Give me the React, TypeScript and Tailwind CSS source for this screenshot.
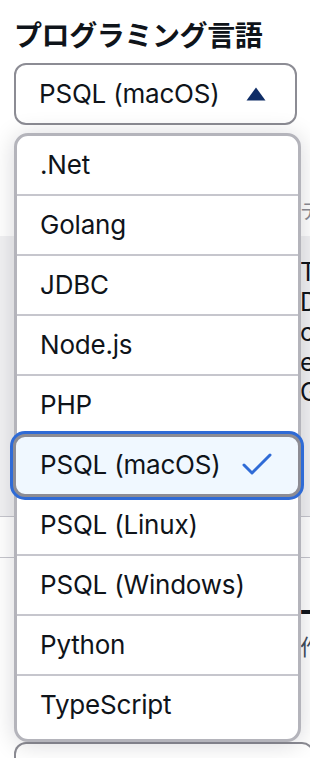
import React from "react";

const items = [
  ".Net",
  "Golang",
  "JDBC",
  "Node.js",
  "PHP",
  "PSQL (macOS)",
  "PSQL (Linux)",
  "PSQL (Windows)",
  "Python",
  "TypeScript",
];

const SELECTED = "PSQL (macOS)";

export default function App() {
  return (
    <div
      className="relative w-[310px] h-[758px] overflow-hidden bg-white text-[#0f141a]"
      style={{ fontFamily: 'Inter, "Noto Sans CJK JP", sans-serif' }}
    >
      {/* Page content (behind the menu) */}
      <div className="pt-[16px] px-[14px]">
        <div
          className="text-[28px] leading-[36px] font-bold tracking-[-0.4px]"
          style={{ fontFamily: '"Noto Sans CJK JP", "Noto Sans", sans-serif' }}
        >
          プログラミング言語
        </div>
        <button className="mt-[11px] flex h-[62px] w-[283px] items-center justify-between rounded-[12px] border-2 border-[#8c8c94] bg-white pl-[23px] pr-[29px] text-[26px] font-normal leading-none tracking-[-0.2px] text-[#0f141a]">
          <span>PSQL (macOS)</span>
          <svg width="20" height="14" viewBox="0 0 20 14">
            <polygon points="10,0.5 19.5,13.5 0.5,13.5" fill="#0f2d66" />
          </svg>
        </button>

        <div
          className="mt-[76px] pl-[286px] text-[20px] leading-[20px] text-[#8c8c94]"
          style={{ fontFamily: '"Noto Sans CJK JP", sans-serif' }}
        >
          テ
        </div>
        <div className="mt-[15px] -mx-[14px] bg-[#f1f1f3] pt-[21px] pb-[109px] pl-[300px] text-[25px] leading-[30px] text-[#0f141a]">
          T<br />D<br />c<br />e<br />G
        </div>
        <div className="-mx-[14px] h-[42px] border-y border-[#c6c6cd]" />
        <div
          className="mt-[37px] pl-[286px] text-[30px] leading-[30px] font-bold"
          style={{ fontFamily: '"Noto Sans CJK JP", sans-serif' }}
        >
          一
        </div>
        <div
          className="mt-[6px] pl-[286px] text-[22px] leading-[28px] text-[#414d5c]"
          style={{ fontFamily: '"Noto Sans CJK JP", sans-serif' }}
        >
          作
        </div>
        <div className="mt-[83px] h-[40px] w-[300px] rounded-t-[12px] border-2 border-b-0 border-[#8c8c94]" />
      </div>

      {/* Dropdown menu overlay */}
      <div className="absolute left-[14px] top-[133px] w-[287px] rounded-[14px] border-[3px] border-[#b4b4bb] bg-white pb-[5px] shadow-[0_2px_24px_rgba(0,7,22,0.16)]">
        {items.map((it, i) => {
          const selected = it === SELECTED;
          const nextSelected = items[i + 1] === SELECTED;
          const last = i === items.length - 1;
          return (
            <div key={it} className="relative">
              <div className="flex h-[58px] items-center pl-[23px] pr-[25px] text-[26px] font-normal leading-none tracking-[-0.2px]">
                {selected && (
                  <div className="absolute -left-[4px] -right-[3px] -top-[2px] -bottom-[1px] rounded-[12px] border-[3px] border-[#8c8c94] bg-[#f0f8ff] shadow-[0_0_0_3px_#2f6bd6]" />
                )}
                <span className="relative flex-1">{it}</span>
                {selected && (
                  <svg className="relative" width="32" height="26" viewBox="0 0 32 26">
                    <polyline
                      points="3,13 11,21 29,3"
                      fill="none"
                      stroke="#2f6bd6"
                      strokeWidth="3"
                      strokeLinecap="round"
                      strokeLinejoin="round"
                    />
                  </svg>
                )}
              </div>
              {!last && (
                <div className={`h-[2px] ${selected || nextSelected ? "bg-transparent" : "bg-[#c6c6cd]"}`} />
              )}
            </div>
          );
        })}
      </div>
    </div>
  );
}
